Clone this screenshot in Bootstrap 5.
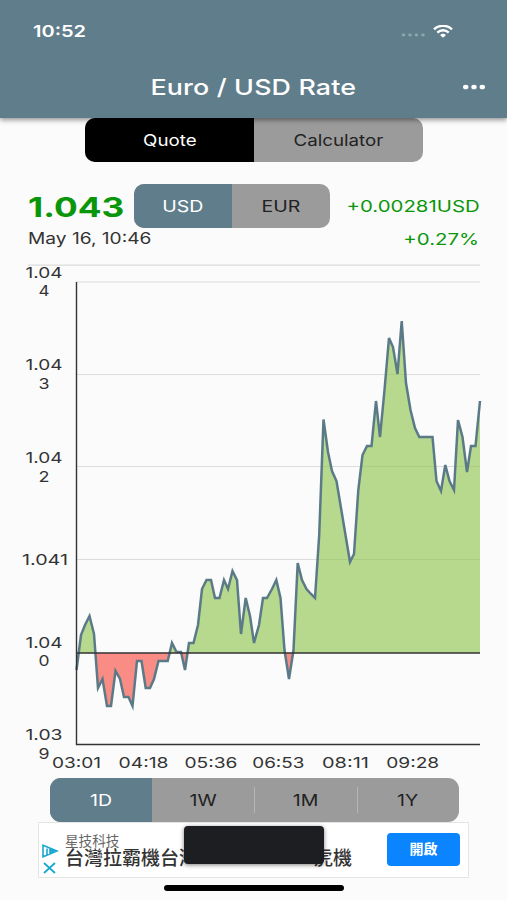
<!DOCTYPE html>
<html lang="en">
<head>
<meta charset="utf-8">
<meta name="viewport" content="width=device-width, initial-scale=1">
<title>Euro / USD Rate</title>
<link href="https://cdn.jsdelivr.net/npm/bootstrap@5.3.0/dist/css/bootstrap.min.css" rel="stylesheet">
<style>
  body { background: #fbfbfb; font-family: Inter, "Liberation Sans", "Noto Sans CJK TC", sans-serif; color: #333; width: 507px; height: 900px; overflow: hidden; }
  .topbar { background: #607d8b; height: 118px; box-shadow: 0 2px 5px rgba(0,0,0,.42); color: #fff; position: relative; z-index: 2; }
  .status { height: 62px; padding: 0 54px 0 33px; }
  .titlebar { height: 50px; padding: 0 21px 0 21px; }
  .wide { display: inline-block; white-space: nowrap; transform: scaleX(1.22); line-height: 1; }
  .wide-l { transform-origin: left; }
  .wide-r { transform-origin: right; }
  .clock { font-size: 16.4px; font-weight: 600; }
  .title { font-size: 22px; font-weight: 500; letter-spacing: .12px; }
  .seg { border-radius: 10px; overflow: hidden; background: #9b9b9b; height: 44px; font-size: 16px; color: #222; }
  .seg > div { flex: 1 1 0; display: flex; align-items: center; justify-content: center; }
  .seg .on { background: #607d8b; color: #fff; }
  .seg .on-dark { background: #000; color: #fff; }
  .mode { width: 338px; margin-left: 85px; }
  .mode .wide { transform: scaleX(1.17); }
  .quote { height: 44px; margin-top: 22px; padding: 0 27px 0 28px; }
  .price { width: 106px; font-size: 27.5px; font-weight: 700; color: #0a960a; padding-top: 3px; }
  .price .wide { transform: scaleX(1.28); }
  .cur { width: 196px; }
  .gain { color: #0a960a; font-size: 16.2px; }
  .quote .gain, .when .gain { transform: scaleX(1.26); }
  .when { height: 20px; padding: 2px 28px 0; font-size: 15.7px; }
  .chart { display: block; margin-top: 7px; }
  .chart text { font-size: 15px; fill: #333; }
  .range { width: 409.5px; margin-left: 49.5px; border-radius: 11px; }
  .range > .tick { position: relative; }
  .tick::before { content: ""; position: absolute; left: 0; top: 9px; height: 26px; border-left: 1.5px solid #b5b5b5; }
  .ad { width: 431px; height: 56px; margin-left: 38px; background: #fff; border: 1.5px solid #e5e5e5; font-family: "Noto Sans CJK TC", sans-serif; position: relative; }
  .ad-marks { width: 26px; padding: 21px 0 0 3px; }
  .ad-brand { font-size: 13.6px; line-height: 16px; color: #666; margin-top: 9px; }
  .ad-line { font-size: 19px; line-height: 18px; color: #333; font-weight: 500; width: 287px; }
  .ad-cut { width: 119px; overflow: hidden; white-space: nowrap; line-height: 24px; margin-top: -3px; }
  .ad-btn { width: 73px; height: 33px; margin: 10px 8px 0 0; border-radius: 4px; background: #0a84ff; color: #fff; font-size: 14px; font-weight: 700; padding-bottom: 2px; }
  .toast-box { position: absolute; left: 145px; top: 3px; width: 140px; height: 38px; border-radius: 4px; background: #1d1e22; box-shadow: 0 1px 4px rgba(0,0,0,.5); }
  .homebar { width: 180px; height: 6px; border-radius: 3px; background: #000; margin: 7px 0 0 164px; }
</style>
</head>
<body>
<header class="topbar">
  <div class="status d-flex align-items-center justify-content-between">
    <span class="wide wide-l clock">10:52</span>
    <div class="d-flex align-items-center gap-2">
      <svg width="24" height="14" viewBox="0 0 24 14" fill="#8fa5b0"><g transform="translate(0 11)"><ellipse cx="2.500" rx="1.800" ry="1.400"/><ellipse cx="9" rx="1.800" ry="1.400"/><ellipse cx="15.500" rx="1.800" ry="1.400"/><ellipse cx="22" rx="1.800" ry="1.400"/></g></svg>
      <svg width="20" height="13" viewBox="0 0 20 13" fill="none" stroke="#fff"><path d="M1 4.300C6 -.3 14 -.3 19 4.300" stroke-width="2.500"/><path d="M4.300 7.600C7.500 4.500 12.500 4.500 15.700 7.600" stroke-width="2.400"/><path d="M7.200 10.200C8.600 8.300 11.400 8.300 12.800 10.200L10 12.700Z" fill="#fff" stroke="none"/></svg>
    </div>
  </div>
  <div class="titlebar d-flex align-items-center justify-content-between">
    <svg width="22" height="6"></svg>
    <span class="wide title">Euro / USD Rate</span>
    <svg width="23" height="6" viewBox="0 0 23 6" fill="#fff"><ellipse cx="2.700" cy="3" rx="2.700" ry="2.300"/><ellipse cx="11" cy="3" rx="2.700" ry="2.300"/><ellipse cx="19.300" cy="3" rx="2.700" ry="2.300"/></svg>
  </div>
</header>
<main>
  <div class="seg mode d-flex">
    <div class="on-dark"><span class="wide">Quote</span></div>
    <div><span class="wide">Calculator</span></div>
  </div>
  <div class="quote d-flex align-items-center">
    <div class="price"><span class="wide wide-l">1.043</span></div>
    <div class="seg cur d-flex">
      <div class="on"><span class="wide">USD</span></div>
      <div><span class="wide">EUR</span></div>
    </div>
    <span class="wide wide-r gain ms-auto">+0.00281USD</span>
  </div>
  <div class="when d-flex justify-content-between align-items-center">
    <span class="wide wide-l">May 16, 10:46</span>
    <span class="wide wide-r gain">+0.27%</span>
  </div>
  <svg class="chart" width="507" height="523" viewBox="0 255 507 523">
    <defs>
      <clipPath id="above"><rect x="76" y="260" width="405" height="393"/></clipPath>
      <clipPath id="below"><rect x="76" y="653" width="405" height="92"/></clipPath>
      <path id="rate" d="M76.500 670L81 635L85 625L89.500 616L94 634L98 688L102.500 679L107 706H111L115.500 671L120 679L124 697H128.500L132.500 706L137 661H141.500L145.700 688H150L154 679L158.500 661H167.700L172 643L176.500 652H181L185 670L189 643H193.500L198 625L202 589L206.500 580H211L215 598H219.500L224 580L228 589L232.500 571L237 580L241 634L245.700 598L250 616L254 643L259 625L263 598H267L272 589L276.300 580L280.500 598L284.500 650L289 679L293.500 650L297.700 563L302 580L306.500 589L311 594L315 598L319.200 535L323.500 419.500L328 452L332 471L336.500 481L341 508L345.500 535L350 562L354 554L358.300 490L362.500 455L367 446H371.500L376 401L380 437L384.500 390L389 338L393 347L397.500 374L401.700 321L406 383L410.500 410L415 428L419.300 437H432.500L436.500 481L441 491L445.300 465L449.500 481L454 490L458 420L462.500 437L467 472L471 446H475.500L480 401"/>
    </defs>
    <g stroke="#dcdcdc" stroke-width="1.200"><path d="M28 265.200H480M77 282H480M77 374.500H480M77 466.500H480M77 559.500H480"/></g>
    <g fill="#8bc34a" fill-opacity=".62" clip-path="url(#above)"><path d="M76.500 653V670L81 635L85 625L89.500 616L94 634L98 688L167.700 661L172 643L176.500 652H181L185 670L189 643H193.500L198 625L202 589L206.500 580H211L215 598H219.500L224 580L228 589L232.500 571L237 580L241 634L245.700 598L250 616L254 643L259 625L263 598H267L272 589L276.300 580L280.500 598L284.500 650L289 679L293.500 650L297.700 563L302 580L306.500 589L311 594L315 598L319.200 535L323.500 419.500L328 452L332 471L336.500 481L341 508L345.500 535L350 562L354 554L358.300 490L362.500 455L367 446H371.500L376 401L380 437L384.500 390L389 338L393 347L397.500 374L401.700 321L406 383L410.500 410L415 428L419.300 437H432.500L436.500 481L441 491L445.300 465L449.500 481L454 490L458 420L462.500 437L467 472L471 446H475.500L480 401V653Z"/></g>
    <g fill="#f98d85" clip-path="url(#below)"><path d="M95 653L98 688L102.500 679L107 706H111L115.500 671L120 679L124 697H128.500L132.500 706L137 661H141.500L145.700 688H150L154 679L158.500 661H167.700L170 653ZM181 653L185 670L187.500 653ZM285 653L289 679L293.500 653Z"/></g>
    <use href="#rate" fill="none" stroke="#5b7a88" stroke-width="2.500"/>
    <path d="M76.500 282V744.500H480M76.500 653H480" fill="none" stroke="#333" stroke-width="1.400"/>
    <g text-anchor="middle">
      <text x="44" y="277.500" textLength="37" lengthAdjust="spacingAndGlyphs">1.04</text><text x="44" y="296" textLength="11" lengthAdjust="spacingAndGlyphs">4</text>
      <text x="44" y="370" textLength="37" lengthAdjust="spacingAndGlyphs">1.04</text><text x="44" y="389" textLength="11" lengthAdjust="spacingAndGlyphs">3</text>
      <text x="44" y="462.500" textLength="37" lengthAdjust="spacingAndGlyphs">1.04</text><text x="44" y="481.500" textLength="11" lengthAdjust="spacingAndGlyphs">2</text>
      <text x="45" y="564.500" textLength="46" lengthAdjust="spacingAndGlyphs">1.041</text>
      <text x="44" y="647.500" textLength="37" lengthAdjust="spacingAndGlyphs">1.04</text><text x="44" y="666.300" textLength="11" lengthAdjust="spacingAndGlyphs">0</text>
      <text x="44" y="740" textLength="37" lengthAdjust="spacingAndGlyphs">1.03</text><text x="44" y="759" textLength="11" lengthAdjust="spacingAndGlyphs">9</text>
      <text x="76.500" y="768" textLength="49" lengthAdjust="spacingAndGlyphs">03:01</text>
      <text x="143.500" y="768" textLength="50" lengthAdjust="spacingAndGlyphs">04:18</text>
      <text x="211" y="768" textLength="53" lengthAdjust="spacingAndGlyphs">05:36</text>
      <text x="278.300" y="768" textLength="52" lengthAdjust="spacingAndGlyphs">06:53</text>
      <text x="345.500" y="768" textLength="47" lengthAdjust="spacingAndGlyphs">08:11</text>
      <text x="412.700" y="768" textLength="53" lengthAdjust="spacingAndGlyphs">09:28</text>
    </g>
  </svg>
  <div class="seg range d-flex">
    <div class="on"><span class="wide">1D</span></div>
    <div><span class="wide">1W</span></div>
    <div class="tick"><span class="wide">1M</span></div>
    <div class="tick"><span class="wide">1Y</span></div>
  </div>
  <div class="ad d-flex align-items-start">
    <div class="ad-marks d-flex flex-column">
      <svg width="17" height="14" viewBox="0 0 17 14" fill="none" stroke="#18a7d0" stroke-width="1.600"><path d="M1 1.200L15 7L1 12.800ZM5 4.500V10.500M8 5V9L11 7Z"/></svg>
      <svg class="mt-1" width="15" height="12" viewBox="0 0 15 12" stroke="#18a7d0" stroke-width="1.700"><path d="M2 1L13 11M13 1L2 11"/></svg>
    </div>
    <div>
      <div class="ad-brand">星技科技</div>
      <div class="ad-line d-flex justify-content-between"><span class="ad-cut">台灣拉霸機台灣</span><span>虎機</span></div>
    </div>
    <div class="ad-btn ms-auto d-flex align-items-center justify-content-center">開啟</div>
    <div class="toast-box"></div>
  </div>
  <div class="homebar"></div>
</main>
<script src="https://cdn.jsdelivr.net/npm/bootstrap@5.3.0/dist/js/bootstrap.bundle.min.js"></script>
</body>
</html>
